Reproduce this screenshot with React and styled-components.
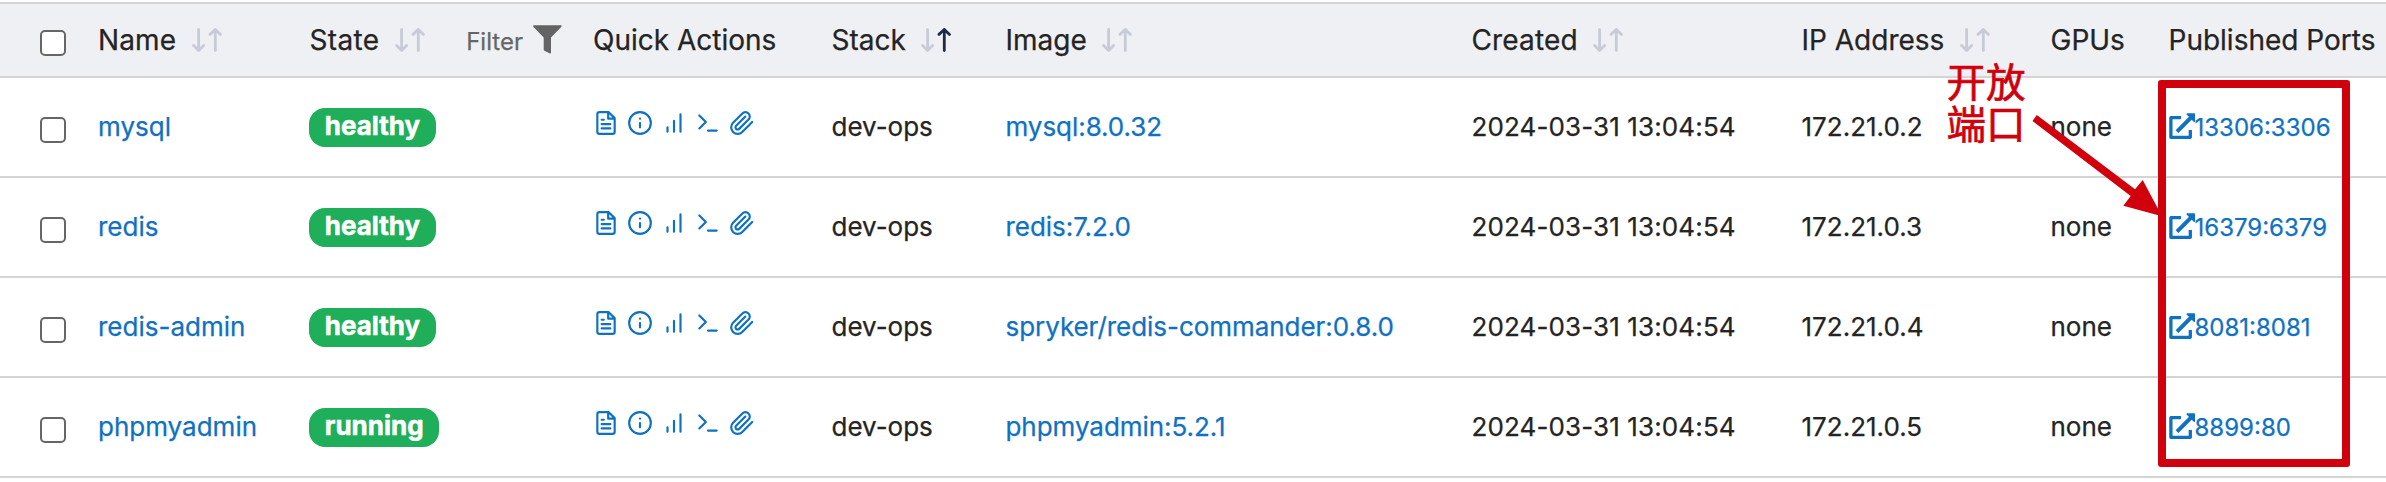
import React from "react";
import styled, { createGlobalStyle } from "styled-components";

const color = {
  text: "#242424",
  muted: "#666666",
  link: "#0f71c1",
  line: "#d4d4d4",
  head: "#eff0f4",
  green: "#1fae5a",
  sortOff: "#c7cbd8",
  sortOn: "#1f2b45",
  mark: "#d0000d",
};

const GlobalStyle = createGlobalStyle`
  * { box-sizing: border-box; }
  body {
    margin: 0;
    background: #fff;
    color: ${color.text};
    font-family: Inter, "Liberation Sans", sans-serif;
    overflow: hidden;
  }
`;

const Page = styled.main`
  position: relative;
  width: 2386px;
  height: 482px;
  padding-top: 2px;
  overflow: hidden;
  -webkit-text-stroke: 0.25px currentColor;
`;

const Row = styled.div`
  display: grid;
  grid-template-columns: 98px 211px 284px 238.5px 174px 466px 330px 249px 118px 1fr;
  align-items: center;
  height: 100px;
  border-bottom: 2px solid ${color.line};
  font-size: 26px;
  white-space: nowrap;
`;

const HeadRow = styled(Row)`
  height: 76px;
  border-top: 2px solid ${color.line};
  background: ${color.head};
  font-size: 28px;
`;

const Cell = styled.div`
  display: flex;
  align-items: center;
`;

const SortCell = styled(Cell)`
  letter-spacing: ${(p) => p.$tracking || 0}px;
`;

const BodyText = styled.span`
  padding-bottom: 1px;
`;

const DateText = styled(BodyText)`
  letter-spacing: 0.12px;
`;

const Link = styled.a`
  padding-bottom: 1px;
  color: ${color.link};
`;

const ImageLink = styled(Link)`
  letter-spacing: -0.05px;
`;

const CheckCell = styled(Cell)`
  padding: 6px 0 0 40px;
`;

const Checkbox = styled.input.attrs({ type: "checkbox" })`
  appearance: none;
  width: 26px;
  height: 26px;
  margin: 0;
  border: 2px solid #666;
  border-radius: 5px;
  background: #fff;
`;

const SortSvg = styled.svg`
  width: 31px;
  height: 24px;
  margin-left: 15.5px;
  fill: none;
  stroke-width: 2.8px;
  stroke-linecap: round;
  stroke-linejoin: round;
`;

const StateHead = styled(Cell)`
  justify-content: space-between;
  padding: 0 31px 0 0.6px;
`;

const FilterButton = styled.span`
  display: flex;
  align-items: center;
  color: ${color.muted};
  font-size: 24px;
`;

const FilterLabel = styled.span`
  padding-top: 2px;
`;

const FunnelSvg = styled.svg`
  width: 29px;
  height: 29px;
  margin: 0 0 1px 10px;
  fill: #636363;
`;

const Badge = styled.span`
  display: flex;
  align-items: center;
  height: 39px;
  margin-top: 1px;
  padding: 0 15.8px 4px;
  border-radius: 16px;
  background: ${color.green};
  color: #fff;
  font-weight: 700;
  -webkit-text-stroke: 0.5px currentColor;
`;

const Actions = styled(Cell)`
  gap: 8px;
  padding-bottom: 8px;
  color: ${color.link};
`;

const ActionSvg = styled.svg`
  width: 26px;
  height: 26px;
  fill: none;
  stroke: currentColor;
  stroke-width: 2;
  stroke-linecap: round;
  stroke-linejoin: round;
`;

const PortLink = styled.a`
  display: flex;
  align-items: center;
  color: ${color.link};
  font-size: 24px;
`;

const ExternalSvg = styled.svg`
  width: 26px;
  height: 26px;
  margin-bottom: 2px;
  fill: none;
  stroke: currentColor;
`;

const Overlay = styled.div`
  position: absolute;
  inset: 0;
  pointer-events: none;
`;

const PortFrame = styled.div`
  position: absolute;
  left: 2157.5px;
  top: 80px;
  width: 192.5px;
  height: 386.5px;
  border: 8px solid ${color.mark};
  border-radius: 3px;
`;

const Note = styled.div`
  position: absolute;
  left: 1946.5px;
  top: 59px;
  width: 80px;
  color: ${color.mark};
  font: 400 39.5px/42px "Noto Sans CJK SC", sans-serif;
  -webkit-text-stroke: 0.7px currentColor;
`;

const ArrowSvg = styled.svg`
  position: absolute;
  left: 2030px;
  top: 110px;
  width: 134px;
  height: 110px;
  fill: ${color.mark};
`;

const Sort = ({ asc }) => (
  <SortSvg viewBox="0 0 31 24">
    <path stroke={color.sortOff} d="M6.6 1.5v21M1.6 17.6l5 4.9 5-4.9" />
    <path stroke={asc ? color.sortOn : color.sortOff} d="M23.3 22.5v-21M18 6.4l5.3-4.9 5.2 4.9" />
  </SortSvg>
);

const SortHead = ({ children, asc, tracking }) => (
  <SortCell $tracking={tracking}>
    {children}
    <Sort asc={asc} />
  </SortCell>
);

const Funnel = () => (
  <FunnelSvg viewBox="0 0 29 29">
    <path d="M.6.2h27.6q.8.8 0 1.7L18 12.6V28q-.6.7-1.6.3l-5-2.5q-.7-.5-.7-1.3V12.6L.5 1.9Q-.2 1 .6.2z" />
  </FunnelSvg>
);

const External = () => (
  <ExternalSvg viewBox="0 0 26 26">
    <path strokeWidth="3.3" strokeLinejoin="round" d="M12 4.7H1.9v19.6h19.4V17" />
    <path strokeWidth="4" d="M8 18.7 22 4.7" />
    <path fill="currentColor" stroke="none" d="M18 .3h7.2q.8 0 .8.8v7.5q-.3.8-1 .3L17.6 1.6Q17.3.7 18 .3z" />
  </ExternalSvg>
);

const actionPaths = [
  "M14.5 2H6a2 2 0 0 0-2 2v16a2 2 0 0 0 2 2h12a2 2 0 0 0 2-2V7.5L14.5 2zM14 2v6h6M16 13H8M16 17H8M10 9H8",
  "M2 12a10 10 0 1 0 20 0a10 10 0 1 0-20 0M12 16v-4M12 8h.01",
  "M12 20V10M18 20V4M6 20v-4",
  "M4 17l6-6-6-6M12 19h8",
  "m21.44 11.05-9.19 9.19a6 6 0 0 1-8.49-8.49l8.57-8.57A4 4 0 1 1 18 8.84l-8.59 8.57a2 2 0 0 1-2.83-2.83l8.49-8.48",
];

const QuickActions = () => (
  <Actions>
    {actionPaths.map((d) => (
      <ActionSvg key={d} viewBox="0 0 24 24">
        <path d={d} />
      </ActionSvg>
    ))}
  </Actions>
);

const containers = [
  { name: "mysql", state: "healthy", image: "mysql:8.0.32", ip: "172.21.0.2", port: "13306:3306" },
  { name: "redis", state: "healthy", image: "redis:7.2.0", ip: "172.21.0.3", port: "16379:6379" },
  { name: "redis-admin", state: "healthy", image: "spryker/redis-commander:0.8.0", ip: "172.21.0.4", port: "8081:8081" },
  { name: "phpmyadmin", state: "running", image: "phpmyadmin:5.2.1", ip: "172.21.0.5", port: "8899:80" },
];

export default function App() {
  return (
    <Page>
      <GlobalStyle />
      <HeadRow>
        <CheckCell><Checkbox /></CheckCell>
        <SortHead tracking={0.1}>Name</SortHead>
        <StateHead>
          <SortHead tracking={0.3}>State</SortHead>
          <FilterButton>
            <FilterLabel>Filter</FilterLabel>
            <Funnel />
          </FilterButton>
        </StateHead>
        <Cell>Quick Actions</Cell>
        <SortHead asc>Stack</SortHead>
        <SortHead>Image</SortHead>
        <SortHead tracking={0.15}>Created</SortHead>
        <SortHead>IP Address</SortHead>
        <Cell>GPUs</Cell>
        <Cell>Published Ports</Cell>
      </HeadRow>
      {containers.map((c) => (
        <Row key={c.name}>
          <CheckCell><Checkbox /></CheckCell>
          <Cell><Link>{c.name}</Link></Cell>
          <Cell><Badge>{c.state}</Badge></Cell>
          <QuickActions />
          <Cell><BodyText>dev-ops</BodyText></Cell>
          <Cell><ImageLink>{c.image}</ImageLink></Cell>
          <Cell><DateText>2024-03-31 13:04:54</DateText></Cell>
          <Cell><BodyText>{c.ip}</BodyText></Cell>
          <Cell><BodyText>none</BodyText></Cell>
          <Cell>
            <PortLink>
              <External />
              {c.port}
            </PortLink>
          </Cell>
        </Row>
      ))}
      <Overlay>
        <PortFrame />
        <Note>开放端口</Note>
        <ArrowSvg viewBox="2030 110 134 110">
          <path d="M2036.8 115 2135 189.3 2142.7 180 2162 216.3 2123.3 205.7 2130.7 196 2032.5 121z" />
        </ArrowSvg>
      </Overlay>
    </Page>
  );
}
